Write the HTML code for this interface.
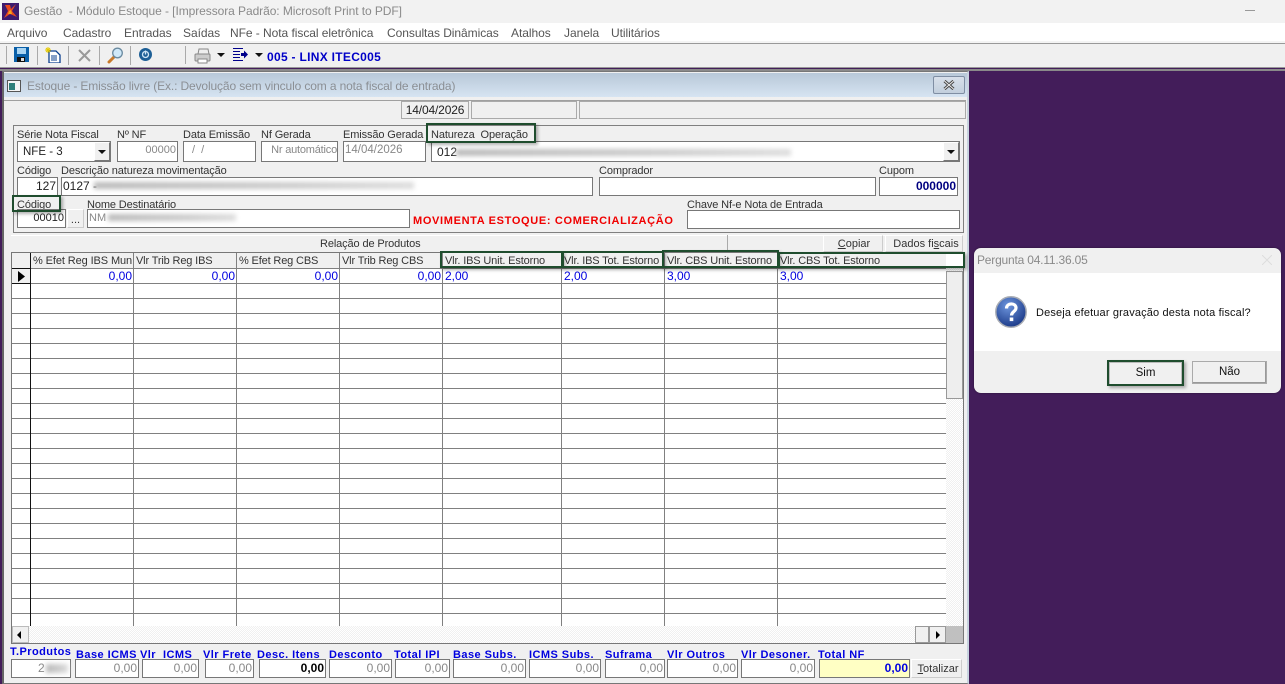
<!DOCTYPE html>
<html lang="pt-BR"><head><meta charset="utf-8"><title>Gestão</title>
<style>
html,body{margin:0;padding:0;width:1285px;height:684px;overflow:hidden;background:#431d5a}
body{position:relative;font-family:"Liberation Sans",sans-serif;font-size:12px;color:#222}
.a,.l,.f,.g,.t,.v,.b,.c{position:absolute}
.l{white-space:nowrap;font-size:11px;line-height:14px;color:#333;height:14px;letter-spacing:-.12px;margin-top:1px}
.f{box-sizing:border-box;background:#fff;border:1px solid #777;white-space:nowrap;text-align:right;line-height:16px;padding:0 1px;font-size:12px;color:#888;overflow:hidden}
.h{font-size:11px}
.g{box-sizing:border-box;border:2px solid #1f4d2e;box-shadow:2px 2px 3px rgba(0,0,0,.3)}
.t{white-space:nowrap;font-weight:bold;color:#0000e0;font-size:11px;line-height:14px;letter-spacing:.45px;margin-top:1px}
.v{width:1px;background:#808080;top:253px;height:373px}
.b{box-sizing:border-box;background:#f0f0f0;border:1px solid #fff;border-right-color:#ccc;border-bottom-color:#ccc;text-align:center;white-space:nowrap;color:#333;font-size:11px}
.c{white-space:nowrap;font-size:11px;line-height:14px;color:#333;top:254px;letter-spacing:-.15px}
.n{position:absolute;white-space:nowrap;font-size:12px;line-height:14px;color:#0000e0;top:269px}
.m{position:absolute;top:26px;font-size:12px;line-height:14px;color:#555;white-space:nowrap;letter-spacing:-.05px}
.s{position:absolute;width:1px;background:#aaa;top:46px;height:19px}
.bl{position:absolute;height:7px;filter:blur(2.5px);background:linear-gradient(90deg,#bbb,#ccc 60%,#ddd)}
</style></head><body>
<!-- title bar -->
<div class="a" style="left:0;top:0;width:1285px;height:23px;background:#f2f2f2"></div>
<svg class="a" style="left:2px;top:3px" width="17" height="17" viewBox="0 0 17 17"><rect width="17" height="17" fill="#3d1a6e"/><path d="M3 2L8 2L9 6L14 1L10 8L15 14L8 11L2 15L6 8Z" fill="#e8491d"/><path d="M7 8L9 7L10 11L6 11Z" fill="#f7a21b"/></svg>
<div class="a" style="left:24px;top:4px;font-size:12px;line-height:15px;color:#8a8a8a;white-space:nowrap;letter-spacing:-.07px">Gestão&nbsp; - Módulo Estoque - [Impressora Padrão: Microsoft Print to PDF]</div>
<div class="a" style="left:1245px;top:10px;width:10px;height:1px;background:#999"></div>
<!-- menu -->
<div class="a" style="left:0;top:23px;width:1285px;height:18px;background:#fff"></div>
<span class="m" style="left:7px">Arquivo</span><span class="m" style="left:63px">Cadastro</span><span class="m" style="left:124px">Entradas</span><span class="m" style="left:183px">Saídas</span><span class="m" style="left:230px">NFe - Nota fiscal eletrônica</span><span class="m" style="left:387px">Consultas Dinâmicas</span><span class="m" style="left:511px">Atalhos</span><span class="m" style="left:564px">Janela</span><span class="m" style="left:611px">Utilitários</span>
<!-- toolbar -->
<div class="a" style="left:0;top:41px;width:1285px;height:2px;background:#f4f4f4"></div>
<div class="a" style="left:0;top:43px;width:1285px;height:1px;background:#999"></div>
<div class="a" style="left:0;top:44px;width:1285px;height:23px;background:#f0f0f0"></div>
<div class="a" style="left:0;top:67px;width:1285px;height:1px;background:#999"></div>
<div class="a" style="left:0;top:69px;width:1285px;height:2px;background:#8a8a8a"></div>
<div class="s" style="left:6px;height:18px"></div><div class="s" style="left:37px"></div><div class="s" style="left:68px"></div><div class="s" style="left:99px"></div><div class="s" style="left:130px"></div><div class="s" style="left:185px;height:18px"></div>
<svg class="a" style="left:14px;top:47px" width="15" height="15" viewBox="0 0 15 15"><rect width="15" height="15" fill="#0a5fa8"/><rect x="3" y="1" width="9" height="6" fill="#a9d4f2"/><rect x="3" y="10" width="8" height="5" fill="#111"/><rect x="7" y="11" width="3" height="3" fill="#ddd"/></svg>
<svg class="a" style="left:45px;top:47px" width="16" height="16" viewBox="0 0 16 16"><path d="M4 4H11L15 8V16H4Z" fill="#fff" stroke="#0a3f8f" stroke-width="1.3"/><path d="M6 9H12M6 11H12M6 13H12" stroke="#0a3f8f"/><path d="M1 1L5 5M5 1L1 5M3 0V6M0 3H6" stroke="#e5c900"/></svg>
<svg class="a" style="left:77px;top:48px" width="15" height="15" viewBox="0 0 15 15"><path d="M2 2L13 13M13 2L2 13" stroke="#9a9a9a" stroke-width="2"/></svg>
<svg class="a" style="left:107px;top:47px" width="17" height="17" viewBox="0 0 17 17"><path d="M7 10L2 15" stroke="#c87a2a" stroke-width="3" stroke-linecap="round"/><circle cx="10.500" cy="6" r="4.800" fill="#cfe8f8" stroke="#6a8aa0" stroke-width="1.300"/></svg>
<svg class="a" style="left:139px;top:48px" width="13" height="13" viewBox="0 0 13 13"><circle cx="6.500" cy="6.500" r="6.500" fill="#1d5f96"/><circle cx="6.500" cy="6.500" r="3" fill="none" stroke="#cfe6f6" stroke-width="1.300"/><path d="M6.500 2.500V6.500" stroke="#cfe6f6" stroke-width="1.300"/></svg>
<svg class="a" style="left:194px;top:48px" width="17" height="16" viewBox="0 0 17 16"><path d="M5 1H14L15 6H4Z" fill="#eee" stroke="#888"/><rect x="1" y="6" width="15" height="7" rx="1" fill="#ccc" stroke="#888"/><rect x="4" y="11" width="9" height="4" fill="#fff" stroke="#888"/></svg>
<svg class="a" style="left:217px;top:53px" width="8" height="5" viewBox="0 0 8 5"><path d="M0 0H8L4 4Z" fill="#111"/></svg>
<svg class="a" style="left:233px;top:48px" width="15" height="14" viewBox="0 0 15 14"><path d="M0 .5H10M0 3.500H7M0 6.500H7M0 9.500H7M0 12.500H10" stroke="#00008b"/><path d="M8 5H11V2.500L15 6.500L11 10.500V8H8Z" fill="#00008b"/></svg>
<svg class="a" style="left:255px;top:53px" width="8" height="5" viewBox="0 0 8 5"><path d="M0 0H8L4 4Z" fill="#111"/></svg>
<div class="a" style="left:267px;top:50px;font-weight:bold;font-size:12px;line-height:15px;color:#0000c8;white-space:nowrap;letter-spacing:.3px">005 - LINX ITEC005</div>
<!-- child window -->
<div class="a" style="left:2px;top:71px;width:967px;height:613px;box-sizing:border-box;background:#f0f0f0;border:1px solid #777;border-left:2px solid #666;border-right:2px solid #c7d3df"></div>
<div class="a" style="left:4px;top:73px;width:963px;height:24px;background:linear-gradient(#b8c8d8,#d6e4f2)"></div>
<svg class="a" style="left:7px;top:80px" width="14" height="12" viewBox="0 0 14 12"><rect x=".5" y=".5" width="13" height="11" fill="#f4f4f4" stroke="#555"/><rect x="2" y="3" width="6" height="7" fill="#2f7f7a"/></svg>
<div class="a" style="left:27px;top:79px;font-size:12px;line-height:14px;color:#8b8f94;white-space:nowrap;letter-spacing:-.13px">Estoque - Emissão livre (Ex.: Devolução sem vinculo com a nota fiscal de entrada)</div>
<div class="a" style="left:933px;top:76px;width:32px;height:18px;box-sizing:border-box;border:1px solid #7f8ea3;border-radius:2px;background:linear-gradient(#d8e0ea,#c2cfdd)"></div>
<svg class="a" style="left:943px;top:80px" width="12" height="10" viewBox="0 0 12 10"><path d="M1.500 1L10.500 9M10.500 1L1.500 9" stroke="#444" stroke-width="3"/><path d="M1.500 1L10.500 9M10.500 1L1.500 9" stroke="#eee" stroke-width="1"/></svg>
<!-- status row -->
<div class="a" style="left:4px;top:100px;width:962px;height:1px;background:#a0a0a0"></div>
<div class="f" style="left:401px;top:101px;width:68px;height:18px;color:#222;text-align:center;border-color:#aaa;background:#f0f0f0;letter-spacing:-.15px">14/04/2026</div>
<div class="f" style="left:471px;top:101px;width:106px;height:18px;border-color:#aaa;background:#f0f0f0"></div>
<div class="f" style="left:579px;top:101px;width:387px;height:18px;border-color:#aaa;background:#f0f0f0"></div>
<!-- group -->
<div class="a" style="left:13px;top:125px;width:951px;height:108px;box-sizing:border-box;border:1px solid #808080"></div>
<div class="l" style="left:17px;top:127px">Série Nota Fiscal</div>
<div class="l" style="left:117px;top:127px">Nº NF</div>
<div class="l" style="left:183px;top:127px">Data Emissão</div>
<div class="l" style="left:261px;top:127px">Nf Gerada</div>
<div class="l" style="left:343px;top:127px">Emissão Gerada</div>
<div class="l" style="left:431px;top:127px">Natureza&nbsp; Operação</div>
<div class="f h" style="left:17px;top:141px;width:94px;height:21px;text-align:left;padding-left:5px;color:#222;line-height:20px;font-size:11.5px">NFE - 3</div>
<div class="b" style="left:94px;top:142px;width:16px;height:19px;border-color:#fff #777 #777 #fff"></div>
<svg class="a" style="left:98px;top:150px" width="8" height="5" viewBox="0 0 8 5"><path d="M0 0H8L4 4Z" fill="#111"/></svg>
<div class="f h" style="left:117px;top:141px;width:61px;height:21px">00000</div>
<div class="f h" style="left:183px;top:141px;width:73px;height:21px;text-align:left;padding-left:8px">/&nbsp; /</div>
<div class="f h" style="left:261px;top:141px;width:77px;height:21px;padding-right:0;letter-spacing:-.2px">Nr automático</div>
<div class="f h" style="left:343px;top:141px;width:83px;height:21px;text-align:left;font-size:11.5px">14/04/2026</div>
<div class="f" style="left:431px;top:141px;width:529px;height:21px;text-align:left;padding-left:5px;color:#222;line-height:20px">012</div>
<div class="bl" style="left:456px;top:149px;width:335px"></div>
<div class="b" style="left:943px;top:142px;width:16px;height:19px;border-color:#fff #777 #777 #fff"></div>
<svg class="a" style="left:947px;top:150px" width="8" height="5" viewBox="0 0 8 5"><path d="M0 0H8L4 4Z" fill="#111"/></svg>
<div class="l" style="left:17px;top:163px">Código</div>
<div class="l" style="left:61px;top:163px">Descrição natureza movimentação</div>
<div class="l" style="left:599px;top:163px">Comprador</div>
<div class="l" style="left:879px;top:163px">Cupom</div>
<div class="f" style="left:17px;top:177px;width:41px;height:19px;color:#222">127</div>
<div class="f" style="left:61px;top:177px;width:532px;height:19px;text-align:left;color:#222">0127 -</div>
<div class="bl" style="left:94px;top:182px;width:320px"></div>
<div class="f" style="left:599px;top:177px;width:277px;height:19px"></div>
<div class="f" style="left:879px;top:177px;width:79px;height:19px;color:#000080;font-weight:bold">000000</div>
<div class="l" style="left:17px;top:197px">Código</div>
<div class="l" style="left:87px;top:197px">Nome Destinatário</div>
<div class="l" style="left:687px;top:197px">Chave Nf-e Nota de Entrada</div>
<div class="f h" style="left:17px;top:209px;width:49px;height:19px;color:#222">00010</div>
<div class="b" style="left:67px;top:209px;width:17px;height:19px;line-height:20px">...</div>
<div class="f h" style="left:87px;top:209px;width:323px;height:19px;text-align:left">NM</div>
<div class="bl" style="left:108px;top:214px;width:128px"></div>
<div class="a" style="left:413px;top:214px;font-weight:bold;font-size:11px;line-height:15px;color:#f00000;white-space:nowrap;letter-spacing:.66px">MOVIMENTA ESTOQUE: COMERCIALIZAÇÃO</div>
<div class="f" style="left:687px;top:210px;width:273px;height:19px"></div>
<!-- Relação bar -->
<div class="a" style="left:11px;top:235px;width:952px;height:1px;background:#fff"></div>
<div class="a" style="left:320px;top:237px;font-size:11px;line-height:14px;color:#333;white-space:nowrap;letter-spacing:-.12px">Relação de Produtos</div>
<div class="a" style="left:727px;top:235px;width:1px;height:16px;background:#aaa"></div>
<div class="b" style="left:823px;top:235px;width:60px;height:17px;line-height:17px;padding-left:2px"><u>C</u>opiar</div>
<div class="b" style="left:885px;top:235px;width:78px;height:17px;line-height:17px;padding-left:4px">Dados fi<u>s</u>cais</div>
<!-- grid -->
<div class="a" style="left:11px;top:252px;width:953px;height:392px;box-sizing:border-box;border:1px solid #777;border-width:1px 1px 2px 1px;background:#fff"></div>
<div class="a" style="left:12px;top:253px;width:934px;height:15px;background:#f0f0f0"></div>
<div class="a" style="left:12px;top:268px;width:18px;height:358px;background:#fff"></div>
<div class="a" style="left:12px;top:268px;width:18px;height:15px;background:#f0f0f0"></div>
<div class="a" style="left:12px;top:268px;width:934px;height:346px;background:repeating-linear-gradient(180deg,#808080 0 1px,transparent 1px 15px)"></div>
<div class="v" style="left:30px;background:#111"></div><div class="v" style="left:133px"></div><div class="v" style="left:236px"></div><div class="v" style="left:339px"></div><div class="v" style="left:442px"></div><div class="v" style="left:561px"></div><div class="v" style="left:664px"></div><div class="v" style="left:777px"></div>
<div class="a" style="left:12px;top:268px;width:18px;height:1px;background:#111"></div>
<div class="a" style="left:12px;top:283px;width:18px;height:1px;background:#111"></div>
<svg class="a" style="left:18px;top:271px" width="8" height="11" viewBox="0 0 8 11"><path d="M0 0L7 5.500L0 11Z" fill="#000"/></svg>
<span class="c" style="left:33px;letter-spacing:-.1px">% Efet Reg IBS Mun</span><span class="c" style="left:136px">Vlr Trib Reg IBS</span><span class="c" style="left:239px">% Efet Reg CBS</span><span class="c" style="left:342px">Vlr Trib Reg CBS</span><span class="c" style="left:445px">Vlr. IBS Unit. Estorno</span><span class="c" style="left:564px">Vlr. IBS Tot. Estorno</span><span class="c" style="left:667px">Vlr. CBS Unit. Estorno</span><span class="c" style="left:780px">Vlr. CBS Tot. Estorno</span>
<span class="n" style="right:1153px">0,00</span><span class="n" style="right:1050px">0,00</span><span class="n" style="right:947px">0,00</span><span class="n" style="right:844px">0,00</span><span class="n" style="left:445px">2,00</span><span class="n" style="left:564px">2,00</span><span class="n" style="left:667px">3,00</span><span class="n" style="left:780px">3,00</span>
<!-- scrollbars -->
<div class="a" style="left:946px;top:268px;width:17px;height:358px;background:repeating-conic-gradient(#f0f0f0 0 25%,#fff 0 50%) 0 0/2px 2px"></div>
<div class="a" style="left:946px;top:271px;width:17px;height:128px;box-sizing:border-box;background:#eee;border:1px solid #999"></div>
<div class="a" style="left:12px;top:626px;width:951px;height:17px;background:repeating-conic-gradient(#f0f0f0 0 25%,#fff 0 50%) 0 0/2px 2px"></div>
<div class="a" style="left:12px;top:626px;width:17px;height:17px;box-sizing:border-box;background:#f0f0f0;border:1px solid #bbb"></div>
<svg class="a" style="left:17px;top:631px" width="5" height="8" viewBox="0 0 5 8"><path d="M4 0V8L0 4Z" fill="#000"/></svg>
<div class="a" style="left:915px;top:626px;width:14px;height:17px;box-sizing:border-box;background:#f0f0f0;border:1px solid #999"></div>
<div class="a" style="left:929px;top:626px;width:17px;height:17px;box-sizing:border-box;background:#f0f0f0;border:1px solid #999"></div>
<svg class="a" style="left:936px;top:631px" width="5" height="8" viewBox="0 0 5 8"><path d="M0 0V8L4 4Z" fill="#000"/></svg>
<div class="a" style="left:946px;top:626px;width:17px;height:17px;background:#c0c0c0"></div>
<!-- totals -->
<div class="t" style="left:10px;top:644px">T.Produtos</div><div class="t" style="left:76px;top:647px">Base ICMS</div><div class="t" style="left:140px;top:647px">Vlr&nbsp; ICMS</div><div class="t" style="left:203px;top:647px">Vlr Frete</div><div class="t" style="left:257px;top:647px">Desc. Itens</div><div class="t" style="left:329px;top:647px">Desconto</div><div class="t" style="left:394px;top:647px">Total IPI</div><div class="t" style="left:453px;top:647px">Base Subs.</div><div class="t" style="left:529px;top:647px">ICMS Subs.</div><div class="t" style="left:605px;top:647px">Suframa</div><div class="t" style="left:667px;top:647px">Vlr Outros</div><div class="t" style="left:741px;top:647px">Vlr Desoner.</div><div class="t" style="left:818px;top:647px">Total NF</div>
<div class="f" style="left:11px;top:659px;width:60px;height:19px;text-align:left;padding-left:26px">2</div>
<div class="bl" style="left:46px;top:664px;width:22px;height:9px"></div>
<div class="f" style="left:75px;top:659px;width:64px;height:19px">0,00</div>
<div class="f" style="left:142px;top:659px;width:57px;height:19px">0,00</div>
<div class="f" style="left:205px;top:659px;width:49px;height:19px">0,00</div>
<div class="f" style="left:259px;top:659px;width:67px;height:19px;color:#000;font-weight:bold">0,00</div>
<div class="f" style="left:329px;top:659px;width:63px;height:19px">0,00</div>
<div class="f" style="left:395px;top:659px;width:55px;height:19px">0,00</div>
<div class="f" style="left:453px;top:659px;width:73px;height:19px">0,00</div>
<div class="f" style="left:529px;top:659px;width:72px;height:19px">0,00</div>
<div class="f" style="left:605px;top:659px;width:60px;height:19px">0,00</div>
<div class="f" style="left:667px;top:659px;width:71px;height:19px">0,00</div>
<div class="f" style="left:741px;top:659px;width:74px;height:19px">0,00</div>
<div class="f" style="left:819px;top:659px;width:91px;height:19px;background:#ffffc4;color:#0000e0;font-weight:bold">0,00</div>
<div class="b" style="left:911px;top:659px;width:51px;height:19px;line-height:19px;padding-left:3px"><u>T</u>otalizar</div>
<!-- dialog -->
<div class="a" style="left:974px;top:248px;width:307px;height:145px;border-radius:7px;overflow:hidden;background:#f0f0f0;box-shadow:0 0 2px rgba(0,0,0,.4)">
<div class="a" style="left:0;top:25px;width:307px;height:78px;background:#fff"></div>
<div class="a" style="left:3px;top:5px;font-size:12px;line-height:15px;color:#8a8a8a;white-space:nowrap;letter-spacing:-.2px">Pergunta 04.11.36.05</div>
<svg class="a" style="left:288px;top:7px" width="10" height="10" viewBox="0 0 10 10"><path d="M0 0L10 10M10 0L0 10" stroke="#ddd"/></svg>
<svg class="a" style="left:21px;top:48px" width="32" height="32" viewBox="0 0 32 32"><defs><radialGradient id="q" cx=".4" cy=".3" r=".8"><stop offset="0" stop-color="#6d95dd"/><stop offset="1" stop-color="#12307f"/></radialGradient></defs><circle cx="16" cy="16" r="15.200" fill="url(#q)" stroke="#a8acb4" stroke-width="1.500"/><path d="M11.500 12.500C11.500 6.500 21 6.500 21 12C21 15.500 16.500 15.500 16.500 19.500" fill="none" stroke="#fff" stroke-width="3.200"/><rect x="14.700" y="21.500" width="3.600" height="3.600" fill="#fff"/></svg>
<div class="a" style="left:62px;top:58px;font-size:11px;line-height:14px;color:#111;white-space:nowrap;letter-spacing:.15px">Deseja efetuar gravação desta nota fiscal?</div>
<div class="a" style="left:135px;top:114px;width:73px;height:23px;box-sizing:border-box;background:#f0f0f0;border:1px solid #bbb;text-align:center;line-height:21px;color:#111;font-size:11.5px">Sim</div>
<div class="a" style="left:218px;top:113px;width:75px;height:23px;box-sizing:border-box;background:#f0f0f0;border:1px solid #aaa;text-align:center;line-height:21px;color:#111;box-shadow:inset -1px -1px 0 #999;font-size:11.5px">Não</div>
</div>
<!-- green highlights -->
<div class="g" style="left:426px;top:123px;width:110px;height:20px"></div>
<div class="g" style="left:12px;top:195px;width:49px;height:17px"></div>
<div class="g" style="left:440px;top:251px;width:123px;height:17px"></div>
<div class="g" style="left:562px;top:251px;width:102px;height:17px"></div>
<div class="g" style="left:662px;top:250px;width:117px;height:18px"></div>
<div class="g" style="left:778px;top:252px;width:187px;height:16px"></div>
<div class="g" style="left:1107px;top:360px;width:77px;height:26px"></div>
</body></html>
